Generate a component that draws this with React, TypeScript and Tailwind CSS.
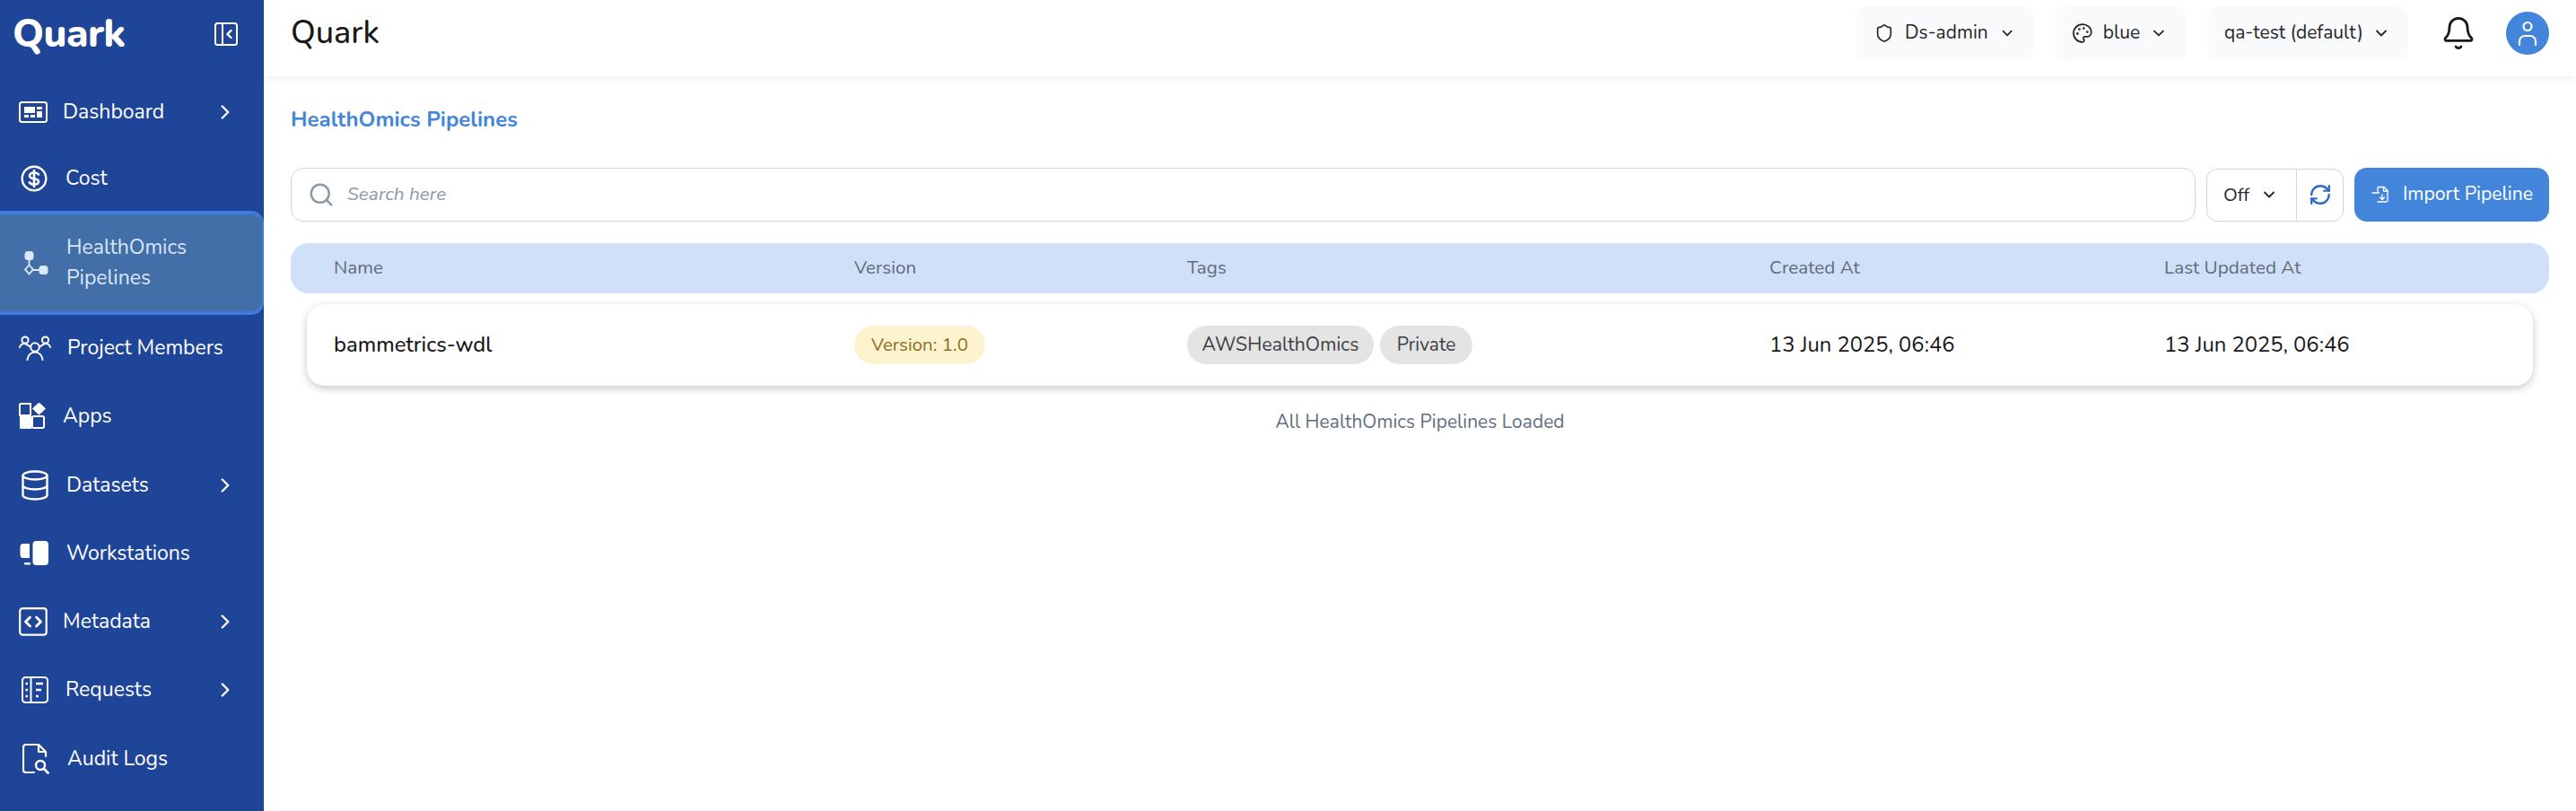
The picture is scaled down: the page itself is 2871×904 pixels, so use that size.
import React from "react";
import { ChevronDown, ChevronRight, Palette, Search, Shield, Bell, RefreshCw } from "lucide-react";

const DashboardIcon = () => (
  <svg width="32" height="24" viewBox="0 0 32 24" fill="none">
    <rect x="1" y="1" width="30" height="22" rx="2.5" stroke="white" strokeWidth="2" />
    <rect x="6" y="6" width="12" height="7" fill="white" />
    <rect x="6" y="15" width="5" height="3" fill="white" />
    <rect x="13" y="15" width="5" height="3" fill="white" />
    <rect x="20" y="6" width="6" height="3" fill="white" />
    <rect x="20" y="11" width="6" height="7" fill="white" />
  </svg>
);

const CostIcon = () => (
  <svg width="30" height="30" viewBox="0 0 30 30" fill="none" stroke="white" strokeWidth="2.4" strokeLinecap="round">
    <circle cx="15" cy="15" r="13.3" />
    <path d="M20 10.5c-1-1.4-3-2-5-2-2.6 0-5 1.2-5 3.4 0 4.8 10 2 10 6.4 0 2.200-2.400 3.300-5 3.300-2.200 0-4.200-.7-5.200-2.300" strokeWidth="2.6" />
    <path d="M15 6v18" strokeWidth="2.6" />
  </svg>
);

const PipelineIcon = () => (
  <svg width="28" height="28" viewBox="0 0 28 28" fill="none">
    <rect x="1.500" y="1" width="10" height="10" rx="3.500" fill="#dbe8fb" />
    <rect x="17.500" y="17" width="10" height="10" rx="3.500" fill="#dbe8fb" />
    <path d="M6.500 11v5M11 22h7" stroke="#dbe8fb" strokeWidth="1.800" />
    <path d="M6.500 16.500l4.500 4.900-4.500 4.900-4.500-4.900z" stroke="#dbe8fb" strokeWidth="1.800" />
  </svg>
);

const MembersIcon = () => (
  <svg width="36" height="28" viewBox="0 0 36 28" fill="none" stroke="white" strokeWidth="2" strokeLinecap="round">
    <circle cx="7" cy="5" r="3.600" />
    <circle cx="29.500" cy="5" r="3.600" />
    <circle cx="18" cy="13" r="4.800" />
    <path d="M1 13c1-3 3-4 5-4 2.500 0 4 1.500 6.500 3.500" />
    <path d="M35 13c-1-3-3-4-5-4-2.500 0-4 1.500-6.500 3.500" />
    <path d="M9.500 27c.5-5 4-8.500 8.500-8.500s8 3.500 8.500 8.500" />
  </svg>
);

const AppsIcon = () => (
  <svg width="30" height="30" viewBox="0 0 30 30" fill="none">
    <path d="M2.500 1h10.500v13H1V2.500A1.500 1.500 0 0 1 2.500 1z" stroke="white" strokeWidth="2" />
    <path d="M1 15h13v14H2.500A1.500 1.500 0 0 1 1 27.500z" fill="white" />
    <rect x="15" y="15" width="13" height="13" rx="1.500" stroke="white" strokeWidth="2" />
    <path d="M22.500 0l7 6.500-7 6.500-7-6.500z" fill="white" strokeLinejoin="round" stroke="white" />
  </svg>
);

const DatasetsIcon = () => (
  <svg width="30" height="34" viewBox="0 0 30 34" fill="none" stroke="white" strokeWidth="2.400">
    <ellipse cx="15" cy="6" rx="13.500" ry="4.500" />
    <path d="M1.500 6v22c0 2.500 6 4.500 13.500 4.500s13.500-2 13.500-4.500V6" />
    <path d="M1.500 17c0 2.500 6 4.500 13.500 4.500s13.500-2 13.500-4.500" />
  </svg>
);

const WorkstationIcon = () => (
  <svg width="32" height="28" viewBox="0 0 32 28" fill="none">
    <path d="M11 3H4a3.500 3.500 0 0 0-3.500 3.500v9A3.500 3.500 0 0 0 4 19h7z" fill="white" />
    <rect x="5" y="24" width="7" height="2.500" rx="1" fill="white" />
    <rect x="14.500" y="0" width="17.500" height="27" rx="4" fill="white" />
  </svg>
);

const MetadataIcon = () => (
  <svg width="32" height="32" viewBox="0 0 32 32" fill="none" stroke="white" strokeWidth="2.200" strokeLinecap="round" strokeLinejoin="round">
    <rect x="1.200" y="1.200" width="29.500" height="29.500" rx="3" />
    <path d="M12.500 11l-5 5 5 5" strokeWidth="2.800" />
    <path d="M19.500 11l5 5-5 5" strokeWidth="2.800" />
  </svg>
);

const RequestsIcon = () => (
  <svg width="30" height="30" viewBox="0 0 30 30" fill="none" stroke="white" strokeWidth="2">
    <rect x="1" y="1" width="28" height="28" rx="3.500" />
    <path d="M10.500 1v28" />
    <path d="M4.500 8h2.500M4.500 15h2.500M4.500 22h2.500" strokeWidth="2.600" />
    <path d="M16 8h8M16 15h6M16 22h3" strokeWidth="2.600" />
  </svg>
);

const AuditIcon = () => (
  <svg width="30" height="34" viewBox="0 0 30 34" fill="none" stroke="white" strokeWidth="2.200" strokeLinecap="round" strokeLinejoin="round">
    <path d="M13 32H4a3 3 0 0 1-3-3V4a3 3 0 0 1 3-3h14l8 8v5" />
    <path d="M18 1.500V9h8" />
    <circle cx="20" cy="24" r="5" strokeWidth="2.400" />
    <path d="M24 28l4.500 4.500" strokeWidth="2.800" />
  </svg>
);

const CollapseIcon = () => (
  <svg width="26" height="26" viewBox="0 0 26 26" fill="none" stroke="white" strokeWidth="2">
    <rect x="1" y="1" width="24" height="24" rx="2.500" />
    <path d="M9 1v24" />
    <path d="M18.500 9l-4 4 4 4" strokeWidth="2.400" strokeLinecap="round" strokeLinejoin="round" />
  </svg>
);

const ImportIcon = () => (
  <svg width="20" height="20" viewBox="0 0 20 20" fill="none" stroke="white" strokeWidth="1.300" strokeLinecap="round" strokeLinejoin="round">
    <path d="M7 7V2.500A1 1 0 0 1 8 1.500h6l4 4v11a1.500 1.500 0 0 1-1.500 1.500H7" />
    <path d="M13.500 1.500V6H18" />
    <path d="M1 8h7.500" />
    <path d="M12 10v5.500M9.500 13l2.500 2.500 2.500-2.500" />
  </svg>
);

const UserIcon = () => (
  <svg width="24" height="28" viewBox="0 0 24 28" fill="none" stroke="white" strokeWidth="2.200" strokeLinecap="round">
    <circle cx="12" cy="6.500" r="4.500" />
    <path d="M3 27v-4a6 6 0 0 1 6-6h6a6 6 0 0 1 6 6v4" />
  </svg>
);

const navItems = [
  { label: "Dashboard", icon: <DashboardIcon />, arrow: true, box: "h-[76px] pl-[21px] gap-[17px]" },
  { label: "Cost", icon: <CostIcon />, box: "h-[72px] pl-[23px] gap-[20px]" },
  { label: "HealthOmics Pipelines", icon: <PipelineIcon />, active: true, box: "h-[116px] pl-[26px] gap-[20px]" },
  { label: "Project Members", icon: <MembersIcon />, box: "h-[74px] pl-[21px] gap-[18px]" },
  { label: "Apps", icon: <AppsIcon />, box: "h-[78px] pl-[21px] gap-[19px]" },
  { label: "Datasets", icon: <DatasetsIcon />, arrow: true, box: "h-[76px] pl-[24px] gap-[20px]" },
  { label: "Workstations", icon: <WorkstationIcon />, box: "h-[76px] pl-[22px] gap-[20px]" },
  { label: "Metadata", icon: <MetadataIcon />, arrow: true, box: "h-[76px] pl-[21px] gap-[17px]" },
  { label: "Requests", icon: <RequestsIcon />, arrow: true, box: "h-[76px] pl-[24px] gap-[19px]" },
  { label: "Audit Logs", icon: <AuditIcon />, box: "h-[77px] pl-[25px] gap-[20px]" },
];

const Sidebar = () => (
  <aside className="w-[294px] shrink-0 bg-[#1f4598] text-white flex flex-col">
    <div className="h-[87px] flex items-center justify-between pl-[14px] pr-[29px] pb-[12px]">
      <span className="text-[44px] font-extrabold leading-none tracking-[-0.5px]">Quark</span>
      <CollapseIcon />
    </div>
    {navItems.map((item) =>
      item.active ? (
        <div
          key={item.label}
          className={`flex items-center bg-[#436fa8] text-[#d9e6fb] border-y-[4px] border-r-[2px] border-[#3d7bdc] rounded-r-[14px] ${item.box}`}
        >
          <span className="shrink-0 flex justify-center">{item.icon}</span>
          <span className="text-[23px] leading-[34px] w-[180px]">{item.label}</span>
        </div>
      ) : (
        <div key={item.label} className={`relative flex items-center ${item.box}`}>
          <span className="shrink-0 flex justify-center">{item.icon}</span>
          <span className="text-[23px] leading-[34px]">{item.label}</span>
          {item.arrow && (
            <ChevronRight className="absolute left-[238px] top-1/2 -translate-y-1/2" size={26} strokeWidth={2.200} />
          )}
        </div>
      )
    )}
  </aside>
);

const HeaderChip = ({ icon, label, box }: { icon?: React.ReactNode; label: string; box: string }) => (
  <div className={`h-[60px] rounded-[12px] bg-[#f9fafb] flex items-center text-[#27272a] text-[21px] whitespace-nowrap ${box}`}>
    {icon}
    <span>{label}</span>
    <ChevronDown size={20} strokeWidth={2.200} className="ml-auto" />
  </div>
);

const Topbar = () => (
  <header className="h-[85px] bg-white shadow-[0_2px_12px_rgba(0,0,0,0.07)] flex items-center pl-[30px] pr-[30px] relative">
    <span className="text-[36px] font-medium text-[#18181b] flex-1 pb-[12px]">Quark</span>
    <div className="flex items-center pb-[12px]">
      <HeaderChip box="w-[197px] pl-[20px] pr-[20px] gap-[12px]" label="Ds-admin" icon={<Shield size={24} strokeWidth={1.800} />} />
      <HeaderChip box="w-[145px] ml-[25px] pl-[18px] pr-[20px] gap-[11px]" label="blue" icon={<Palette size={24} strokeWidth={1.800} />} />
      <HeaderChip box="w-[223px] ml-[25px] pl-[18px] pr-[20px]" label="qa-test (default)" />
      <Bell size={40} strokeWidth={1.700} className="ml-[36px] text-[#18181b]" />
      <div className="w-[48px] h-[48px] ml-[33px] rounded-full bg-[#4285db] flex items-center justify-center">
        <UserIcon />
      </div>
    </div>
  </header>
);

const cols = ["w-[580px]", "w-[371px]", "w-[649px]", "w-[440px]", "flex-1"];

const Table = () => (
  <div>
    <div className="h-[56px] mt-[24px] rounded-[20px] bg-[#d1e0f9] flex items-center pl-[48px] pb-[1px] text-[#5f6b7a] text-[20.700px]">
      {["Name", "Version", "Tags", "Created At", "Last Updated At"].map((h, i) => (
        <div key={h} className={cols[i]}>{h}</div>
      ))}
    </div>
    <div className="h-[91px] mt-[12px] mx-[18px] rounded-[20px] bg-white shadow-[0_3px_10px_rgba(0,0,0,0.22)] flex items-center pl-[30px] text-[#18181b] text-[23.800px]">
      <div className={`${cols[0]} font-medium pt-[1px]`}>bammetrics-wdl</div>
      <div className={cols[1]}>
        <span className="inline-flex items-center h-[43px] w-[146px] justify-center rounded-full bg-[#fdf3cf] text-[#8d6e1f] text-[20.500px]">Version: 1.0</span>
      </div>
      <div className={`${cols[2]} flex gap-[7px]`}>
        <span className="inline-flex items-center justify-center h-[43px] w-[208px] rounded-full bg-[#e4e4e4] text-[#3f3f46] text-[21.300px]">AWSHealthOmics</span>
        <span className="inline-flex items-center justify-center h-[43px] w-[103px] rounded-full bg-[#e4e4e4] text-[#3f3f46] text-[21px]">Private</span>
      </div>
      <div className={`${cols[3]} pt-[1px]`}>13 Jun 2025, 06:46</div>
      <div className={`${cols[4]} pt-[1px]`}>13 Jun 2025, 06:46</div>
    </div>
    <p className="mt-[25px] text-center text-[21px] text-[#5f7080]">All HealthOmics Pipelines Loaded</p>
  </div>
);

const Toolbar = () => (
  <div className="flex items-center h-[60px] mt-[39px]">
    <div className="flex-1 h-[60px] rounded-[14px] border-[1.500px] border-[#d1d5e0] flex items-center pl-[18px] gap-[14px]">
      <Search size={30} strokeWidth={2} className="text-[#8a9aa6]" />
      <span className="italic text-[20.800px] text-[#8a9aa6]">Search here</span>
    </div>
    <div className="w-[153px] ml-[12px] h-[59px] rounded-[12px] border-[1.500px] border-[#d1d5e0] flex items-center">
      <div className="w-[100px] h-full flex items-center justify-between pl-[18px] pr-[20px] border-r-[1.500px] border-[#d1d5e0] text-[20.500px] text-[#27272a]">
        Off <ChevronDown size={20} strokeWidth={2.200} />
      </div>
      <div className="flex-1 flex justify-center">
        <RefreshCw size={26} strokeWidth={2.200} className="text-[#2f6ac8]" />
      </div>
    </div>
    <button className="w-[217px] ml-[12px] h-[60px] rounded-[14px] bg-[#4285db] text-white text-[21.200px] flex items-center justify-center gap-[15px] pl-[1px]">
      <ImportIcon />
      Import Pipeline
    </button>
  </div>
);

export default function App() {
  return (
    <div className="flex h-[904px] overflow-hidden bg-white font-['Nunito','Lato','Open_Sans',sans-serif]">
      <Sidebar />
      <div className="flex-1 flex flex-col">
        <Topbar />
        <main className="pl-[30px] pr-[30px] pt-[33px]">
          <h1 className="text-[24px] leading-[30px] font-bold text-[#4285db]">HealthOmics Pipelines</h1>
          <Toolbar />
          <Table />
        </main>
      </div>
    </div>
  );
}
